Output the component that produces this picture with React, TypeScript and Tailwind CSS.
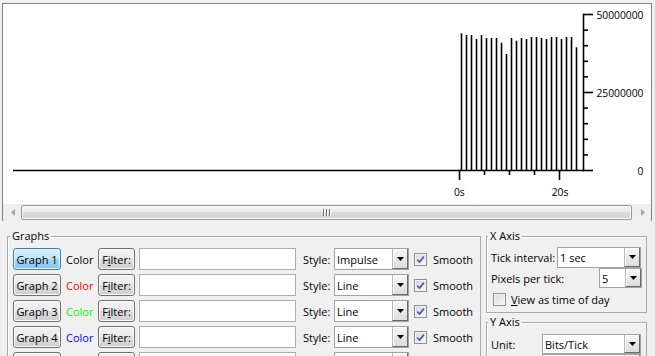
import React from "react";

const tops = [33.3, 35, 35, 39, 35, 38, 38, 38, 42.7, 54, 38, 40.7, 38, 39, 37, 37, 38, 39, 37, 37, 39, 37, 37, 47.3];

function Chart() {
  const yTicks = Array.from({ length: 11 }, (_, k) => 14 + k * 15.6);
  const xTicks = [459.5, 484.5, 509.5, 534.5, 559.5];
  return (
    <svg width="648" height="200" viewBox="3 4 648 200" className="block">
      <g stroke="#000" strokeWidth="1.6" fill="none">
        <line x1="13" y1="170.5" x2="584" y2="170.5" />
        <line x1="583.5" y1="13.7" x2="583.5" y2="171.3" />
        {yTicks.map((y, k) => (
          <line key={k} x1="583.5" x2={k % 5 === 0 ? 593 : 588} y1={y + 0.5} y2={y + 0.5} />
        ))}
        {xTicks.map((x, i) => (
          <line key={i} x1={x} x2={x} y1="170.5" y2={i === 0 || i === 4 ? 180 : 175} />
        ))}
        {tops.map((t, i) => (
          <line key={i} x1={461.5 + 5 * i} x2={461.5 + 5 * i} y1={t} y2="170.5" />
        ))}
      </g>
      <g fontFamily="'Open Sans', sans-serif" fontSize="10.3" fill="#000">
        <text x="643.5" y="14.5" textAnchor="end" dominantBaseline="central">50000000</text>
        <text x="643.5" y="92.5" textAnchor="end" dominantBaseline="central">25000000</text>
        <text x="643.5" y="170.5" textAnchor="end" dominantBaseline="central">0</text>
        <text x="459.3" y="191.5" textAnchor="middle" dominantBaseline="central">0s</text>
        <text x="560" y="191.5" textAnchor="middle" dominantBaseline="central">20s</text>
      </g>
    </svg>
  );
}

function Scrollbar() {
  return (
    <div className="flex h-[17px] items-center bg-[#efefef]">
      <div className="flex w-[18px] justify-center pl-[1px]">
        <svg width="4" height="7" viewBox="0 0 4 7">
          <path d="M4 0v7L0 3.5z" fill="#a3a3a3" />
        </svg>
      </div>
      <div className="flex h-[15px] w-[611px] items-center justify-center rounded-[2px] border border-[#979797] bg-[linear-gradient(#f4f4f4,#e9e9e9_50%,#dcdcdc_50%,#d2d2d2)] shadow-[inset_0_0_0_1px_#f8f8f8]">
        <div className="flex gap-[2px]">
          <div className="h-[7px] w-[1px] bg-[#6f6f6f] shadow-[1px_0_0_#fafafa]" />
          <div className="h-[7px] w-[1px] bg-[#6f6f6f] shadow-[1px_0_0_#fafafa]" />
          <div className="h-[7px] w-[1px] bg-[#6f6f6f] shadow-[1px_0_0_#fafafa]" />
        </div>
      </div>
      <div className="flex flex-1 justify-center pl-[2px]">
        <svg width="4" height="7" viewBox="0 0 4 7">
          <path d="M0 0v7L4 3.5z" fill="#a3a3a3" />
        </svg>
      </div>
    </div>
  );
}

function Arrow() {
  return (
    <svg width="7" height="4" viewBox="0 0 7 4">
      <path d="M0 0h7L3.5 4z" fill="#000" />
    </svg>
  );
}

function Select({ value, className }: { value: string; className: string }) {
  return (
    <div className={`flex border border-[#a2a2a2] bg-white ${className}`}>
      <div className="flex flex-1 items-center pl-[2px] leading-none">{value}</div>
      <div className="flex w-[16px] items-center justify-center border-l border-r border-b border-l-[#b9b9b9] border-r-[#6b6b6b] border-b-[#6b6b6b] bg-[linear-gradient(#f7f7f7,#dcdcdc)] shadow-[inset_1px_1px_0_#ffffff]">
        <Arrow />
      </div>
    </div>
  );
}

function Check({ checked }: { checked: boolean }) {
  return (
    <div className="flex h-[13px] w-[13px] shrink-0 items-center justify-center border border-[#8e8f8f] bg-[linear-gradient(135deg,#d6d6d6,#fafafa)] shadow-[inset_0_0_0_1px_#f4f4f4]">
      {checked && (
        <svg width="9" height="9" viewBox="0 0 9 9">
          <path d="M1.2 4.6 L3.6 7 L7.9 1.6" stroke="#4b5e9c" strokeWidth="1.7" fill="none" />
        </svg>
      )}
    </div>
  );
}

const rows = [
  { n: 1, colorCls: "text-[#000000]", style: "Impulse", active: true },
  { n: 2, colorCls: "text-[#ff0000]", style: "Line", active: false },
  { n: 3, colorCls: "text-[#00ff00]", style: "Line", active: false },
  { n: 4, colorCls: "text-[#0000ff]", style: "Line", active: false },
  { n: 5, colorCls: "text-[#ff00ff]", style: "Line", active: false },
];

const btnGray =
  "border-[#707070] bg-[linear-gradient(#f2f2f2,#ebebeb_50%,#dddddd_50%,#cfcfcf)] shadow-[inset_0_0_0_1px_#fbfbfb]";
const btnBlue =
  "border-[#3c7fb1] bg-[linear-gradient(#d8eefb,#c2e4f7_50%,#a5d6f2_50%,#86c5ea)] shadow-[inset_0_0_0_1px_#e4f3fc]";

function GraphRow({ r }: { r: (typeof rows)[number] }) {
  return (
    <div className="flex h-[22px] items-center">
      <div
        className={`flex h-[22px] w-[48px] items-center justify-center rounded-[3px] border ${r.active ? btnBlue : btnGray}`}
      >
        Graph {r.n}
      </div>
      <span className={`ml-[5px] w-[32px] ${r.colorCls}`}>Color</span>
      <div className={`flex h-[22px] w-[37px] items-center justify-center rounded-[3px] border ${btnGray}`}>
        <span>
          F<u className="underline">i</u>lter:
        </span>
      </div>
      <div className="ml-[4px] h-[22px] w-[157px] border border-[#abadb3] bg-white" />
      <span className="ml-[7px] w-[31px]">Style:</span>
      <Select value={r.style} className="h-[22px] w-[75px]" />
      <div className="ml-[5px]">
        <Check checked={r.n <= 4} />
      </div>
      <span className="ml-[6px]">Smooth</span>
    </div>
  );
}

export default function App() {
  return (
    <div className="h-[356px] w-[655px] overflow-hidden bg-[#f0f0f0] font-['Open_Sans',sans-serif] text-[11px] leading-[15px] text-black">
      <div className="pt-[3px] pl-[2px]">
        <div className="w-[650px] border-l border-t border-r border-[#828282]">
          <div className="bg-white">
            <Chart />
          </div>
          <Scrollbar />
        </div>
      </div>
      <div className="flex items-start pt-[7px] pl-[7px]">
        <fieldset className="w-[474px] border border-[#a9a9a9] shadow-[inset_1px_1px_0_#ffffff]">
          <legend className="ml-[2px] px-[2px] pb-[2px]">Graphs</legend>
          <div className="flex flex-col gap-[4px] pt-[3px] pl-[5px]">
            {rows.map((r) => (
              <GraphRow key={r.n} r={r} />
            ))}
          </div>
        </fieldset>
        <div className="ml-[5px] flex flex-col gap-[1px]">
          <fieldset className="w-[161px] border border-[#a9a9a9] shadow-[inset_1px_1px_0_#ffffff]">
            <legend className="ml-[1px] px-[2px] pb-[2px]">X Axis</legend>
            <div className="flex flex-col pt-[2px] pl-[4px] pr-[4px] pb-[5px]">
              <div className="flex h-[21px] items-center">
                <span className="w-[66px]">Tick interval:</span>
                <Select value="1 sec" className="h-[21px] w-[84px]" />
              </div>
              <div className="flex h-[20px] items-center">
                <span className="flex-1">Pixels per tick:</span>
                <Select value="5" className="h-[20px] w-[43px]" />
              </div>
              <div className="mt-[3px] flex h-[16px] items-center pl-[2px]">
                <Check checked={false} />
                <span className="ml-[5px]">
                  <u className="underline">V</u>iew as time of day
                </span>
              </div>
            </div>
          </fieldset>
          <fieldset className="w-[161px] border border-[#a9a9a9] shadow-[inset_1px_1px_0_#ffffff]">
            <legend className="ml-[1px] px-[2px] pb-[2px]">Y Axis</legend>
            <div className="flex flex-col pt-[3px] pl-[4px] pr-[4px] pb-[5px]">
              <div className="flex h-[20px] items-center">
                <span className="w-[51px]">Unit:</span>
                <Select value="Bits/Tick" className="h-[20px] w-[99px]" />
              </div>
              <div className="flex h-[20px] items-center">
                <span className="w-[51px]">Scale:</span>
                <Select value="Auto" className="h-[20px] w-[99px]" />
              </div>
            </div>
          </fieldset>
        </div>
      </div>
    </div>
  );
}
